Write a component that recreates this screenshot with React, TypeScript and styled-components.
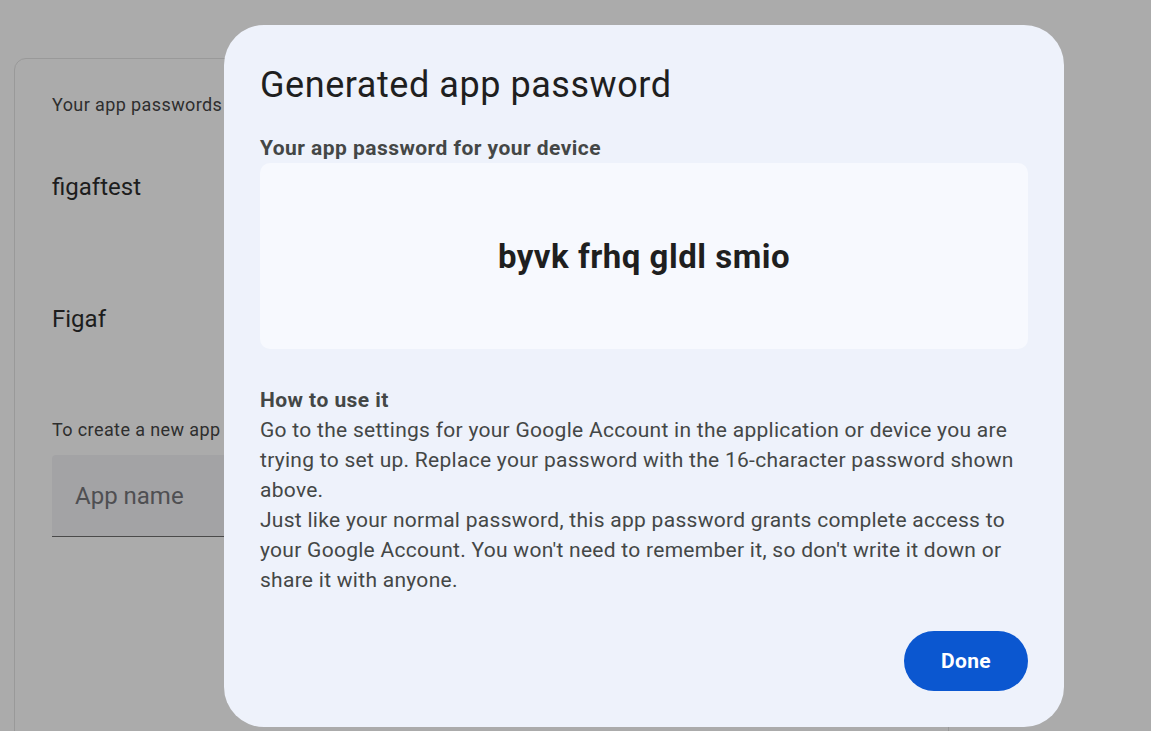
import React from 'react';
import styled, { createGlobalStyle } from 'styled-components';

const GlobalStyle = createGlobalStyle`
  html, body {
    margin: 0;
    padding: 0;
    height: 100%;
    overflow: hidden;
  }
  body {
    background: #ababab;
    font-family: Roboto, "Liberation Sans", Arial, sans-serif;
  }
`;

const Page = styled.div`
  position: relative;
  height: 731px;
  overflow: hidden;
  padding-left: 14px;
`;

const PageTitle = styled.h1`
  margin: -26px 0 0 18px;
  font-size: 22px;
  line-height: 28px;
  font-weight: 400;
  color: #7d84a3;
`;

const Card = styled.section`
  margin-top: 56px;
  width: 935px;
  height: 720px;
  border: 1px solid #999999;
  border-radius: 12px;
  padding: 34px 37px 0;
  box-sizing: border-box;
`;

const Caption = styled.p<{ $gap?: number }>`
  margin: ${(p) => p.$gap ?? 0}px 0 0;
  font-size: 18px;
  line-height: 24px;
  letter-spacing: 0.4px;
  color: #2e2e2e;
  white-space: nowrap;
`;

const AppRow = styled.div`
  padding: 52px 0;
  font-size: 24px;
  line-height: 28px;
  color: #1d1d1d;
`;

const AppList = styled.div`
  margin-top: 4px;
`;

const Field = styled.div`
  margin-top: 13px;
  width: 400px;
  height: 82px;
  box-sizing: border-box;
  background: #a3a3a5;
  border-radius: 4px 4px 0 0;
  border-bottom: 1px solid #4a4a4a;
  display: flex;
  align-items: center;
  padding-left: 23px;
  font-size: 24px;
  color: #4f4f52;
`;

const Dialog = styled.div`
  position: absolute;
  left: 224px;
  top: 25px;
  width: 840px;
  height: 702px;
  box-sizing: border-box;
  background: #eef2fb;
  border-radius: 40px;
  padding: 38px 36px 0;
  display: flex;
  flex-direction: column;
`;

const DialogTitle = styled.h2`
  margin: 0;
  font-size: 36px;
  line-height: 44px;
  font-weight: 400;
  letter-spacing: 0.55px;
  color: #1f1f1f;
`;

const Label = styled.div<{ $gap: number }>`
  margin-top: ${(p) => p.$gap}px;
  font-size: 21px;
  line-height: 28px;
  font-weight: 700;
  letter-spacing: 0.45px;
  color: #444746;
`;

const PasswordBox = styled.div`
  margin-top: 1px;
  height: 186px;
  border-radius: 10px;
  background: #f7f9fe;
  display: flex;
  align-items: center;
  justify-content: center;
  font-size: 33px;
  font-weight: 700;
  letter-spacing: 0.5px;
  color: #1f1f1f;
`;

const Body = styled.div`
  font-size: 21px;
  line-height: 30px;
  letter-spacing: 0.28px;
  color: #444746;
`;

const HowTitle = styled(Body)`
  margin-top: 36px;
  font-weight: 700;
  letter-spacing: 0.45px;
`;

const Actions = styled.div`
  margin-top: 36px;
  display: flex;
  justify-content: flex-end;
`;

const DoneButton = styled.button`
  width: 124px;
  height: 60px;
  border: none;
  border-radius: 30px;
  background: #0b57d0;
  color: #ffffff;
  font-family: inherit;
  font-size: 21px;
  font-weight: 700;
  letter-spacing: 0.3px;
  cursor: pointer;
`;

export default function App() {
  return (
    <>
      <GlobalStyle />
      <Page>
        <PageTitle>App passwords</PageTitle>
        <Card>
          <Caption>Your app passwords</Caption>
          <AppList>
            <AppRow>figaftest</AppRow>
            <AppRow>Figaf</AppRow>
          </AppList>
          <Caption $gap={33}>To create a new app specific password, type a name for it below...</Caption>
          <Field>App name</Field>
        </Card>

        <Dialog role="dialog">
          <DialogTitle>Generated app password</DialogTitle>
          <Label $gap={27}>Your app password for your device</Label>
          <PasswordBox>byvk frhq gldl smio</PasswordBox>
          <HowTitle>How to use it</HowTitle>
          <Body>
            Go to the settings for your Google Account in the application or device you are trying to
            set up. Replace your password with the 16-character password shown above.
          </Body>
          <Body>
            Just like your normal password, this app password grants complete access to your Google
            Account. You won't need to remember it, so don't write it down or share it with anyone.
          </Body>
          <Actions>
            <DoneButton>Done</DoneButton>
          </Actions>
        </Dialog>
      </Page>
    </>
  );
}
